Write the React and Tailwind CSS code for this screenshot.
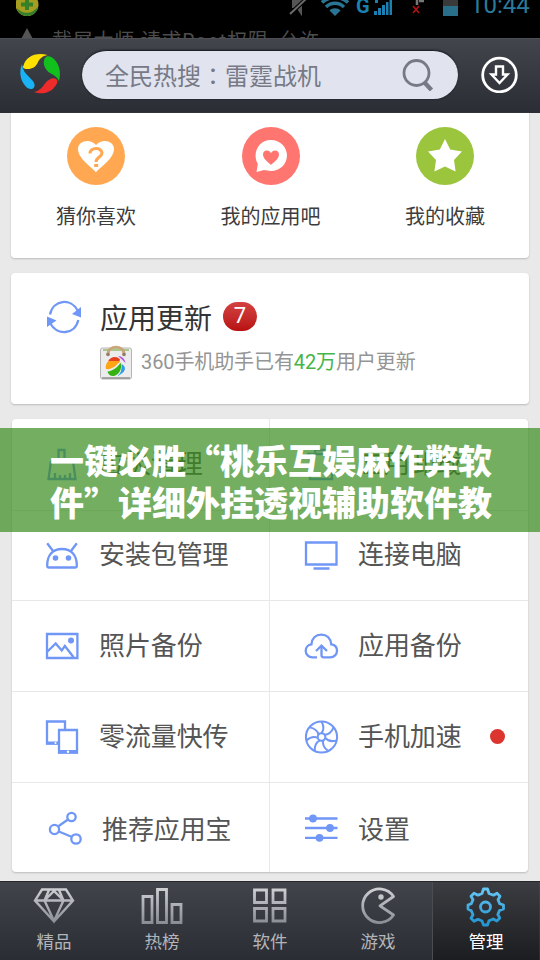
import React from 'react';
import clsx from 'clsx';

const BLUE = '#7096f6';

const Icon = ({ children, className = 'w-8 h-8 overflow-visible', viewBox = '0 0 32 32', width = 2.3 }) => (
  <svg className={className} viewBox={viewBox} fill="none" stroke={BLUE} strokeWidth={width}>
    {children}
  </svg>
);

const BroomIcon = () => (
  <Icon>
    <path d="M12.5 13V2h6v11M5 13h22M5 13L2.5 31h27L27 13M9 25v6M14 27v4M19 27v4M24 25v6" />
  </Icon>
);

const TrashIcon = () => (
  <Icon>
    <path d="M2 6h28M10 6V2h12v4M5 6v25h22V6" />
  </Icon>
);

const AndroidIcon = () => (
  <Icon>
    <path d="M3 28.5h26a1.8 1.8 0 0 0 1.8-1.8C31 16.5 25.5 10 16 10S1 16.5 1.2 26.7A1.8 1.8 0 0 0 3 28.5zM1.2 4.2l6 8M30.8 4.2l-6 8" />
    <circle cx="9.5" cy="19" r="2.8" fill={BLUE} stroke="none" />
    <circle cx="22.5" cy="19" r="2.8" fill={BLUE} stroke="none" />
  </Icon>
);

const MonitorIcon = () => (
  <Icon>
    <path d="M1 3.500h30.500v22H1zM8.500 29.500h16" />
  </Icon>
);

const PhotoIcon = () => (
  <Icon>
    <path d="M1 5h30.400v24H1zM1.500 22.500l8.200-8 6 7 3.200-4.500 8.500 11" />
    <circle cx="25" cy="11.500" r="3" fill={BLUE} stroke="none" />
  </Icon>
);

const CloudIcon = () => (
  <Icon>
    <path d="M12 28.300H7.500C3.500 28.300.7 25.400.7 21.800c0-3.300 2.300-6 5.700-6.400C7 9.200 11 5.600 16.300 5.600s9.300 3.600 10 9.800c3.400.5 5.700 3.100 5.700 6.400 0 3.600-2.800 6.500-6.800 6.500h-6.500c-1.600 0-2.200-.7-2.200-2V17" />
    <path d="M11 22l5.500-5.300L22 22" />
  </Icon>
);

const DevicesIcon = () => (
  <Icon>
    <path d="M12 23.500H1V1.500h18V10" />
    <path d="M0 21.500h12v3H0z" fill={BLUE} stroke="none" />
    <path d="M13 10h18v22.500H13z" />
    <path d="M12 30h20v3.500H12z" fill={BLUE} stroke="none" />
    <circle cx="9.500" cy="23" r="1" fill="#fff" stroke="none" />
    <circle cx="22" cy="31.800" r="1.200" fill="#fff" stroke="none" />
  </Icon>
);

const FanIcon = () => (
  <Icon width={2}>
    <circle cx="16.500" cy="17" r="15.600" />
    <circle cx="16.500" cy="17" r="3.800" />
    {[0, 51.4, 102.8, 154.2, 205.6, 257, 308.4].map(angle => (
      <path key={angle} d="M16.500 13.200C19 10 19 6 16.500 1.500" transform={`rotate(${angle} 16.500 17)`} />
    ))}
  </Icon>
);

const ShareIcon = () => (
  <Icon>
    <circle cx="5.500" cy="16.500" r="4.600" />
    <circle cx="22.500" cy="4" r="4.200" />
    <circle cx="27" cy="26" r="4.700" />
    <path d="M9 13.500L19 6.500M9.800 18.500l12.700 5.200" />
  </Icon>
);

const SlidersIcon = () => (
  <Icon>
    <path d="M0 5.500h32.500M0 15h32.500M0 24.800h32.500" />
    <g fill={BLUE} stroke="none">
      <circle cx="8" cy="5.500" r="3.900" />
      <circle cx="25" cy="15" r="3.900" />
      <circle cx="14.500" cy="24.800" r="3.900" />
    </g>
  </Icon>
);

const TOOLS = [
  { label: '垃圾清理', icon: BroomIcon },
  { label: '应用卸载', icon: TrashIcon },
  { label: '安装包管理', icon: AndroidIcon },
  { label: '连接电脑', icon: MonitorIcon },
  { label: '照片备份', icon: PhotoIcon },
  { label: '应用备份', icon: CloudIcon },
  { label: '零流量快传', icon: DevicesIcon },
  { label: '手机加速', icon: FanIcon, dot: true },
  { label: '推荐应用宝', icon: ShareIcon, shifted: true },
  { label: '设置', icon: SlidersIcon },
];

const StatusBar = () => (
  <div className="h-[38px] bg-black overflow-hidden">
    <div className="flex h-5 items-start pl-4 text-[#1b7fb0]">
      <svg className="w-6 h-4 shrink-0" viewBox="0 0 24 16">
        <circle cx="11" cy="4.500" r="11.500" fill="#a59e20" />
        <path d="M1 8c5 6 14 7 21-1-1 6-6 9-11 9S2 13 1 8z" fill="#35802c" />
        <path d="M11-2V10M5 4.500h12" stroke="#37802a" strokeWidth="4" />
      </svg>
      <svg className="w-5 h-4 ml-[248px] shrink-0" viewBox="0 0 20 16" fill="none" stroke="#555" strokeWidth="2">
        <path d="M5 0v7h4l4 6V0" fill="#555" />
        <path d="M18-1L2 14" stroke="#000" strokeWidth="4" />
        <path d="M18-1L2 14" stroke="#6a6a6a" />
      </svg>
      <svg className="w-[30px] h-4 ml-3 shrink-0" viewBox="0 0 30 16" fill="none" stroke="#2a7596" strokeWidth="3.400">
        <path d="M2 2.500C9-4 21-4 28 2.500M6 7c5-5 13-5 18 0" />
        <path d="M9.500 10.500C12 7.500 18 7.500 20.500 10.500L15 16z" fill="#2a7596" stroke="none" />
      </svg>
      <span className="ml-1.5 -mt-[5px] w-[14px] font-['Roboto'] text-[20px] leading-[22px] font-bold">G</span>
      <svg className="w-5 h-4 ml-1 shrink-0" viewBox="0 0 20 16" fill="#1b7fb0">
        <path d="M0 11h3v4H0zM4 8h3v7H4zM8 5h3v10H8zM12 2h2.500v13H12zM15.500 0H18v15h-2.500zM1 0h3v3H1z" />
      </svg>
      <svg className="w-4 h-4 ml-4 shrink-0" viewBox="0 0 16 16" fill="none">
        <path d="M7 0v5M9 1h5" stroke="#777" strokeWidth="2.500" />
        <path d="M3 6l6 7M9 6l-6 7" stroke="#b51212" strokeWidth="1.600" />
      </svg>
      <svg className="w-[15px] h-4 ml-[17px] shrink-0" viewBox="0 0 15 16">
        <path d="M0 0h15v16H0z" fill="#2a6f8a" />
        <path d="M0 0h15v6H0z" fill="#3a3a3a" />
      </svg>
      <span className="ml-3 -mt-[9px] font-['Roboto'] text-[24px] leading-7 text-[#2a7b9b]">10:44</span>
    </div>
    <div className="flex mt-2 pl-[17px] text-[20px] leading-[26px] text-[#4c4c4c]">
      <svg className="w-5 h-5 shrink-0" viewBox="0 0 20 20" fill="#555">
        <path d="M10 0l7 13H3z" />
      </svg>
      <span className="ml-[15px] whitespace-nowrap tracking-[0.75px]">截屏大师 请求Root权限, 允许</span>
    </div>
  </div>
);

const Header = () => (
  <header className="flex h-[75px] items-center border-t border-[#4d4f55] bg-linear-to-b from-[#43454d] to-[#2b2d34] pb-[3px] pl-[18px]">
    <svg className="w-11 h-11" viewBox="0 0 44 44">
      <path d="M5.500 12.500C8 4 17-1 29.500 2c-5 1-7 3-9.500 7-2 5-6 7-10 7-4 0-6-1-4.500-3.500z" fill="#ffe000" />
      <path d="M27 5c2-3 6-2 9 1 5 5 7.500 13 5 22-2-4-5-6-9-8-5-3-8-10-5-15z" fill="#12c01d" />
      <path d="M16 39c5-1 8-4 11-8.500 3-4 7-6 10-5 3 1 3 4 1 6.500-4 7-13 10.500-22 7z" fill="#ee2b2b" />
      <path d="M4 11c-3 7-2 16 3 21.500 3 4 6 4 8 3 2.500-2 2-6-1.500-9C10 22 5 20 4 11z" fill="#18b2f5" />
    </svg>
    <div className="ml-5 flex h-[49px] w-[376px] items-center justify-between rounded-full border-t border-[#202128] bg-[#e1e4ef] pl-[23px] pr-6 shadow-[0_0_2px_#17181c]">
      <span className="pt-0.5 text-[24px] leading-none text-[#777a86]">
        全民热搜<span lang="zh-TW" className="font-['Noto_Sans_CJK_TC']">：</span>雷霆战机
      </span>
      <svg className="w-8 h-8" viewBox="0 0 32 32" fill="none" stroke="#777a86">
        <circle cx="14.500" cy="14" r="12.500" strokeWidth="2.800" />
        <path d="M22.500 23.500l7 7.500" strokeWidth="4.400" />
      </svg>
    </div>
    <svg className="ml-[23px] w-[37px] h-[37px]" viewBox="0 0 37 37" fill="none" stroke="#fff" strokeWidth="2.800">
      <circle cx="18.500" cy="19" r="16.800" />
      <path d="M15 10.500h7v8h4.500l-8 8.500-8-8.500H15z" strokeWidth="2.400" />
    </svg>
  </header>
);

const Shortcut = ({ label, className, children }) => (
  <div className="flex flex-col items-center">
    <div className={clsx('w-[58px] h-[58px] rounded-full', className)}>
      <svg className="w-full h-full" viewBox="0 0 58 58">{children}</svg>
    </div>
    <span className="mt-5 text-[20px] leading-6 text-[#3c3c3c]">{label}</span>
  </div>
);

const Shortcuts = () => (
  <section className="mx-[11px] flex h-[145px] justify-between rounded-b-sm bg-white pt-[14px] pl-[45px] pr-11 shadow-[0_1px_2px_#bbb]">
    <Shortcut label="猜你喜欢" className="bg-[#ffa751]">
      <path d="M29 45.500C26 41 11 32 11 22c0-8 12-11 18-4 6-7 18-4 18 4 0 10-15 19-18 23.500z" fill="#fff" />
      <path d="M23 26.500c0-6.500 12-6.500 12-.5 0 4-6 4-6 9" fill="none" stroke="#ffa751" strokeWidth="3" />
      <path d="M27.200 37h4v3h-4z" fill="#ffa751" />
    </Shortcut>
    <Shortcut label="我的应用吧" className="bg-[#ff756f]">
      <path d="M29 13c9 0 16 7 16 15.500S38 44 29 44c-3 0-5-.8-7-1l-7.500 2 1.300-8C10 27 16 13 29 13z" fill="#fff" />
      <path d="M29 38c-3-3-8-6-8-10.500 0-4.500 5.500-5.500 8-1.500 2.500-4 8-3 8 1.500C37 32 32 35 29 38z" fill="#ff756f" />
    </Shortcut>
    <Shortcut label="我的收藏" className="bg-[#9ac53c]">
      <path d="M29 12l5.200 10.500L46 24.500l-8 8.500 1.600 11.500L29 39.500l-10.600 5L20 33l-8-8.500 11.800-2z" fill="#fff" />
    </Shortcut>
  </section>
);

const UpdateCard = () => (
  <section className="mx-[11px] mt-[15px] flex h-[131px] rounded-sm bg-white pl-9 pt-[27px] shadow-[0_1px_2px_#bbb]">
    <Icon className="w-[34px] h-[34px]" viewBox="0 0 34 34">
      <path d="M3 14.500C6-.5 24-2.500 31 11M31.300 20C28 35 10 36 3 23" />
      <path d="M34 7v10.500l-9-3.500zM0 16.500v10.500l9.500-6.500z" fill={BLUE} stroke="none" />
    </Icon>
    <div className="ml-[19px] pt-[3px]">
      <div className="flex items-center">
        <h2 className="text-[28px] leading-[34px] text-[#333]">应用更新</h2>
        <span className="ml-[11px] -mt-2 h-[29px] w-[34px] rounded-full bg-linear-to-b from-[#d34141] to-[#b80f10] text-center font-['Roboto'] text-[22px] leading-[27px] text-white">7</span>
      </div>
      <div className="mt-[7px] flex items-center">
        <svg className="-ml-1 mr-1 w-9 h-9" viewBox="0 0 36 36">
          <rect x="4.500" y="4" width="31" height="31" rx="2" fill="#ececec" stroke="#b5b5b5" />
          <path d="M6 34h28" stroke="#8f8f8f" strokeWidth="1.500" />
          <path d="M7 6h26" stroke="#a9c98b" strokeWidth="2" />
          <path d="M12 10c0-9 16-9 16 0" fill="none" stroke="#c9a77c" strokeWidth="3" />
          <circle cx="12" cy="10.500" r="1.800" fill="#8f7d65" />
          <circle cx="28" cy="10.500" r="1.800" fill="#8f7d65" />
          <path d="M12 17.500c2-5 9-6 12-2l-1 3z" fill="#e8401f" />
          <path d="M10 25c-1-4 1-7 3-8l11 0c-3 4-8 9-14 8z" fill="#ffa414" />
          <path d="M11.500 27.500C17 27 22 23 24.500 18.500 27 25 22 32 17 32c-3 0-5-2-5.500-4.500z" fill="#36b313" />
          <path d="M21 32c4-2 5-7 4.500-12 6 3 4 9-4.500 12z" fill="#2b9ceb" />
          <path d="M22 12c4 0 7 3 7.500 7l-3-3z" fill="#b45ae0" />
        </svg>
        <p className="ml-[5px] text-[20px] leading-6 tracking-[-0.1px] text-[#959595]">
          360手机助手已有<span className="text-[#44b549]">42万</span>用户更新
        </p>
      </div>
    </div>
  </section>
);

const ToolCell = ({ tool, index }) => {
  const { label, icon: ToolIcon, dot, shifted } = tool;
  return (
    <div
      className={clsx(
        'flex items-center border-[#e8e8e8]',
        index % 2 === 0 && 'border-r',
        index % 2 === 0 && !shifted && 'pl-[34px]',
        index % 2 === 1 && 'pl-[35px]',
        shifted && 'pl-[37px]',
        index < 8 ? 'border-b pb-0.5' : 'pt-[3px]'
      )}
    >
      <ToolIcon />
      <span className="ml-[21px] pt-px text-[26px] leading-8 text-[#555] tracking-[-0.1px]">{label}</span>
      {dot && <span className="ml-7 w-[15px] h-[15px] rounded-full bg-[#dc342f]" />}
    </div>
  );
};

const ToolGrid = () => (
  <section className="mx-3 mt-[15px] grid h-[453px] grid-cols-2 grid-rows-[92px_90px_91px_91px_89px] rounded-sm bg-white shadow-[0_1px_2px_#bbb]">
    {TOOLS.map((tool, index) => (
      <ToolCell key={tool.label} tool={tool} index={index} />
    ))}
  </section>
);

const TabItem = ({ label, active, children }) => (
  <div
    className={clsx(
      'flex flex-col items-center pt-[3px]',
      active
        ? 'w-[107px] border-l border-[#4b4c50] bg-linear-to-b from-[#3c3d42] to-[#1c1d20] text-white'
        : 'w-[108px] text-[#b3b5ba]'
    )}
  >
    <svg className="w-[42px] h-[42px]" viewBox="0 0 42 42" fill="none" stroke={active ? 'url(#tabBlue)' : 'url(#tabGrey)'} strokeWidth="2.800">
      {children}
    </svg>
    <span className="mt-[5px] text-[17.5px] leading-5">{label}</span>
  </div>
);

const TabBar = () => (
  <nav className="mt-[9px] flex h-[79px] border-t border-[#26272b] bg-linear-to-b from-[#42444b] to-[#2b2d34]">
    <svg className="absolute w-0 h-0">
      <defs>
        <linearGradient id="tabGrey" gradientUnits="userSpaceOnUse" x1="0" y1="3" x2="0" y2="38">
          <stop offset="0" stopColor="#cfd0d4" />
          <stop offset="1" stopColor="#8c8e96" />
        </linearGradient>
        <linearGradient id="tabBlue" gradientUnits="userSpaceOnUse" x1="0" y1="3" x2="0" y2="38">
          <stop offset="0" stopColor="#68c8f5" />
          <stop offset="1" stopColor="#2496d2" />
        </linearGradient>
      </defs>
    </svg>
    <TabItem label="精品">
      <path d="M9 4.500h24l7 11L21 36.500 2 15.500zM1.500 15.500h39M16 5l-4.500 10.500L21 36l9.500-20.500L26 5M12 15l9-9 9 9" strokeWidth="2.400" />
    </TabItem>
    <TabItem label="热榜">
      <path d="M2 11.500h9v26H2zM16.500 4.500h9v33h-9zM31 19.500h9v18h-9z" />
    </TabItem>
    <TabItem label="软件">
      <path d="M5.500 5h12v12.500h-12zM24 5h12v12.500H24zM5.500 23.500h12V36h-12zM24 23.500h12V36H24z" />
    </TabItem>
    <TabItem label="游戏">
      <path d="M36.500 11.500A16.800 16.800 0 1 0 36.500 30L23 20.800z" strokeLinejoin="round" />
      <circle cx="24" cy="12" r="2.700" fill="#c5c6ca" stroke="none" />
    </TabItem>
    <TabItem label="管理" active>
      <path
        d="M18.500 4h4l1.500 4.500 4.500 1.700 3.500-2 3 3-2 3.500 1.700 4 3.800 1.300v4l-4 1.500-1.700 4 2 3.500-3 3-3.500-2-4.300 1.700-1.500 4.300h-4L17 36l-4-1.700-4 2-3-3 2-3.500-1.700-4L3 24v-4l3.300-1.300 1.700-4-2-3.500 3-3 4 2 4-1.700z"
        strokeLinejoin="round"
      />
      <circle cx="20.500" cy="22" r="5" />
    </TabItem>
  </nav>
);

const Banner = () => (
  <div className="absolute inset-x-0 top-[428px] h-[104px] bg-[rgba(57,140,28,0.7)] pl-[50px] pt-[11px]">
    <p className="w-[460px] font-['Noto_Sans_CJK_SC',sans-serif] text-[34px] leading-[42px] font-black whitespace-nowrap text-white">
      一键必胜“桃乐互娱麻作弊软
      <br />
      件”详细外挂透视辅助软件教
    </p>
  </div>
);

export default function App() {
  return (
    <div lang="zh-CN" className="relative h-[960px] w-[540px] overflow-hidden bg-[#e9e9e9] font-['Roboto','Noto_Sans_CJK_SC',sans-serif]">
      <StatusBar />
      <Header />
      <Shortcuts />
      <UpdateCard />
      <ToolGrid />
      <TabBar />
      <Banner />
    </div>
  );
}
